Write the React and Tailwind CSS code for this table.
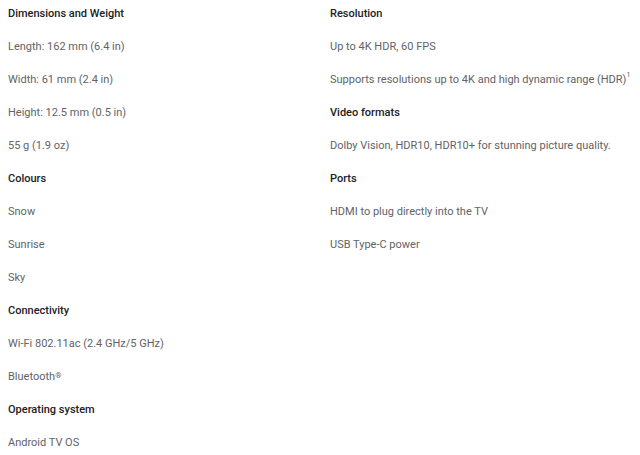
const left = [
  { title: "Dimensions and Weight", items: ["Length: 162 mm (6.4 in)", "Width: 61 mm (2.4 in)", "Height: 12.5 mm (0.5 in)", "55 g (1.9 oz)"] },
  { title: "Colours", items: ["Snow", "Sunrise", "Sky"] },
  {
    title: "Connectivity",
    items: [
      "Wi-Fi 802.11ac (2.4 GHz/5 GHz)",
      <>
        Bluetooth<span className="text-[8px] leading-none align-[2px]">®</span>
      </>,
    ],
  },
  { title: "Operating system", items: ["Android TV OS"] },
]

const right = [
  {
    title: "Resolution",
    items: [
      "Up to 4K HDR, 60 FPS",
      <>
        Supports resolutions up to 4K and high dynamic range (HDR)
        <sup className="text-[7px] leading-none align-[3px]">1</sup>
      </>,
    ],
  },
  { title: "Video formats", items: ["Dolby Vision, HDR10, HDR10+ for stunning picture quality."] },
  { title: "Ports", items: ["HDMI to plug directly into the TV", "USB Type-C power"] },
]

const Column = ({ groups }) => (
  <div className="flex flex-col">
    {groups.map((g) => (
      <div key={g.title}>
        <div className="pt-[6px] pb-[11px] h-[33px] leading-4 font-medium text-[#202124] whitespace-nowrap">{g.title}</div>
        {g.items.map((item, i) => (
          <div key={i} className="pt-[6px] pb-[11px] h-[33px] leading-4 text-[#5f6368] whitespace-nowrap">
            {item}
          </div>
        ))}
      </div>
    ))}
  </div>
)

export default function App() {
  return (
    <div className="bg-white w-[640px] h-[455px] overflow-hidden px-2 grid grid-cols-2 gap-x-5 text-[11px] font-['Roboto',sans-serif]">
      <Column groups={left} />
      <Column groups={right} />
    </div>
  )
}
